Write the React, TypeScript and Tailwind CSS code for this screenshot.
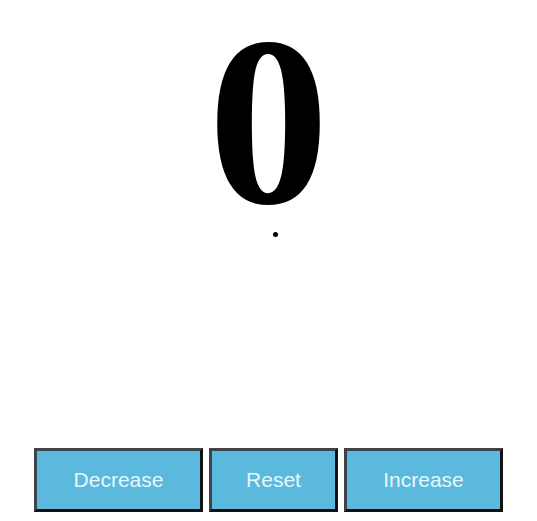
import React, { useState } from "react";

export default function App() {
  const [count, setCount] = useState(0);

  return (
    <div className="h-[521px] w-full bg-white flex flex-col items-center">
      {/* Counter value */}
      <div className="flex flex-col items-center">
        <h1 className="text-[242px] leading-none font-bold text-black font-['Liberation_Serif',serif]">
          {count}
        </h1>
        <span className="-mt-[10px] ml-[14px] w-[5px] h-[5px] rounded-full bg-black" />
      </div>

      <div className="flex-1" />

      {/* Controls */}
      <div className="flex justify-center gap-[6px] pb-[9px]">
        <CounterButton label="Decrease" width="w-[169px]" onClick={() => setCount(count - 1)} />
        <CounterButton label="Reset" width="w-[129px]" onClick={() => setCount(0)} />
        <CounterButton label="Increase" width="w-[159px]" onClick={() => setCount(count + 1)} />
      </div>
    </div>
  );
}

interface CounterButtonProps {
  label: string;
  width: string;
  onClick: () => void;
}

function CounterButton({ label, width, onClick }: CounterButtonProps) {
  return (
    <button
      onClick={onClick}
      className={`${width} h-[64px] bg-[#5ab9dc] border-[3px] border-t-[#3d4347] border-l-[#3d4347] border-b-[#111] border-r-[#111] text-[#e8f7fc] text-[21px] font-medium font-['Liberation_Sans',Arial,sans-serif] flex items-center justify-center`}
    >
      {label}
    </button>
  );
}
